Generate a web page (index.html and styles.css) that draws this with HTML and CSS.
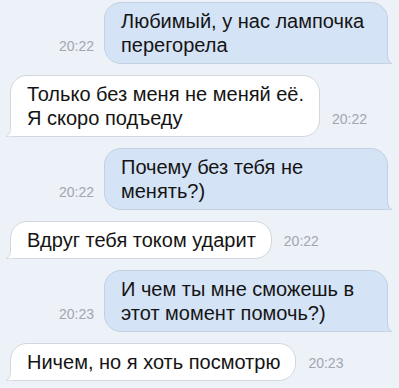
FILE: index.html
```html
<!DOCTYPE html>
<html lang="ru">
<head>
    <meta charset="UTF-8">
    <meta name="viewport" content="width=device-width, initial-scale=1.0">
    <title>Переписка</title>
    <link rel="stylesheet" href="styles.css">
</head>
<body>
    <div class="chat">
        <div class="row out">
            <span class="time">20:22</span>
            <div class="bubble">Любимый, у нас лампочка перегорела
                <svg class="tail" width="16" height="16" viewBox="0 0 16 16"><path class="tail-fill" d="M0 0H12V6C12 11 13 14 16 15.6C12 16 9 15.6 7 15H0Z"/><path class="tail-line" d="M11.5 0V6C11.5 11 12.5 14 16 15.7C12 16 9 15.5 6 15.5H0"/></svg>
            </div>
        </div>
        <div class="row in">
            <div class="bubble">Только без меня не меняй её.<br>Я скоро подъеду
                <svg class="tail" width="16" height="16" viewBox="0 0 16 16"><path class="tail-fill" d="M0 0H12V6C12 11 13 14 16 15.6C12 16 9 15.6 7 15H0Z"/><path class="tail-line" d="M11.5 0V6C11.5 11 12.5 14 16 15.7C12 16 9 15.5 6 15.5H0"/></svg>
            </div>
            <span class="time">20:22</span>
        </div>
        <div class="row out">
            <span class="time">20:22</span>
            <div class="bubble">Почему без тебя не менять?)
                <svg class="tail" width="16" height="16" viewBox="0 0 16 16"><path class="tail-fill" d="M0 0H12V6C12 11 13 14 16 15.6C12 16 9 15.6 7 15H0Z"/><path class="tail-line" d="M11.5 0V6C11.5 11 12.5 14 16 15.7C12 16 9 15.5 6 15.5H0"/></svg>
            </div>
        </div>
        <div class="row in">
            <div class="bubble">Вдруг тебя током ударит
                <svg class="tail" width="16" height="16" viewBox="0 0 16 16"><path class="tail-fill" d="M0 0H12V6C12 11 13 14 16 15.6C12 16 9 15.6 7 15H0Z"/><path class="tail-line" d="M11.5 0V6C11.5 11 12.5 14 16 15.7C12 16 9 15.5 6 15.5H0"/></svg>
            </div>
            <span class="time">20:22</span>
        </div>
        <div class="row out">
            <span class="time">20:23</span>
            <div class="bubble">И чем ты мне сможешь в этот момент помочь?)
                <svg class="tail" width="16" height="16" viewBox="0 0 16 16"><path class="tail-fill" d="M0 0H12V6C12 11 13 14 16 15.6C12 16 9 15.6 7 15H0Z"/><path class="tail-line" d="M11.5 0V6C11.5 11 12.5 14 16 15.7C12 16 9 15.5 6 15.5H0"/></svg>
            </div>
        </div>
        <div class="row in">
            <div class="bubble">Ничем, но я хоть посмотрю
                <svg class="tail" width="16" height="16" viewBox="0 0 16 16"><path class="tail-fill" d="M0 0H12V6C12 11 13 14 16 15.6C12 16 9 15.6 7 15H0Z"/><path class="tail-line" d="M11.5 0V6C11.5 11 12.5 14 16 15.7C12 16 9 15.5 6 15.5H0"/></svg>
            </div>
            <span class="time">20:23</span>
        </div>
    </div>
</body>
</html>
```

FILE: styles.css
```css
body {
    margin: 0;
    background: #edf1f8;
    font-family: "Liberation Sans", Arial, sans-serif;
    color: #141414;
}

.chat {
    display: flex;
    flex-direction: column;
    gap: 11px;
    padding: 2px 11px 0 10px;
}

.row {
    display: flex;
    align-items: flex-end;
    gap: 10px;
}

.row.out {
    justify-content: flex-end;
}

.row.in {
    gap: 12px;
}

.bubble {
    position: relative;
    box-sizing: border-box;
    max-width: 284px;
    padding: 6px 12px 6px 16px;
    font-size: 20px;
    line-height: 24px;
    border: 1px solid #c3d0df;
    border-radius: 17px;
}

.out .bubble {
    background: #d4e3f6;
    border-bottom-right-radius: 10px;
}

.in .bubble {
    max-width: 320px;
    padding-right: 15px;
    background: #ffffff;
    border-color: #d2d7de;
    border-bottom-left-radius: 10px;
}

.tail {
    position: absolute;
    bottom: -1px;
    right: -5px;
    display: block;
}

.in .tail {
    right: auto;
    left: -5px;
    transform: scaleX(-1);
}

.tail-fill {
    fill: #d4e3f6;
}

.tail-line {
    fill: none;
    stroke: #c3d0df;
    stroke-width: 1;
}

.in .tail-fill {
    fill: #ffffff;
}

.in .tail-line {
    stroke: #d2d7de;
}

.time {
    font-size: 14px;
    line-height: 24px;
    margin-bottom: 6px;
    color: #a2a6ad;
}
```
